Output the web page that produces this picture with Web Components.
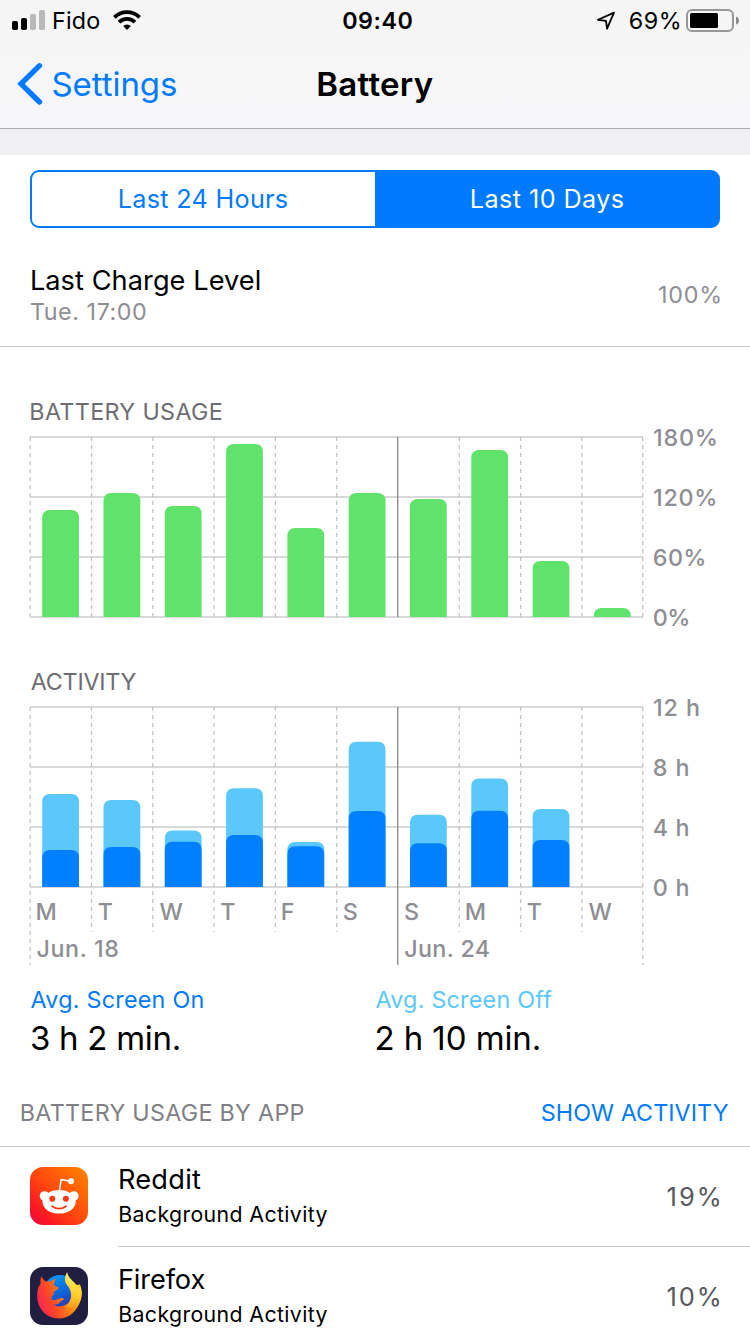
<!DOCTYPE html>
<html lang="en">
<head>
<meta charset="utf-8">
<title>Battery</title>
<style>
  body {
    margin: 0;
    background: #fff;
    font-family: Inter, "Liberation Sans", sans-serif;
    color: #000;
  }
</style>
</head>
<body>
<battery-screen></battery-screen>

<script>
const FONT = 'Inter, "Liberation Sans", sans-serif';
const pen = document.createElement("canvas").getContext("2d");

// one line of text, tracked so that its glyphs span exactly `ink` pixels
class InkLabel extends HTMLElement {
  constructor() {
    super();
    this.attachShadow({ mode: "open" });
  }

  connectedCallback() {
    const text = this.textContent;
    const size = Number(this.getAttribute("size")) || 23.3;
    const weight = this.getAttribute("weight") || 400;
    // measured large, because glyph bounds come back in whole pixels
    pen.font = `${weight} ${size * 10}px ${FONT}`;
    const m = pen.measureText(text);
    const left = m.actualBoundingBoxLeft / 10;
    const natural = left + m.actualBoundingBoxRight / 10;
    const ink = Number(this.getAttribute("ink")) || natural;
    const tracking = text.length > 1 ? (ink - natural) / (text.length - 1) : 0;

    this.shadowRoot.innerHTML = `
      <style>
        :host {
          display: block;
          flex: none;
          width: ${ink}px;
          white-space: nowrap;
          font-family: ${FONT};
          font-size: ${size}px;
          font-weight: ${weight};
          letter-spacing: ${tracking.toFixed(3)}px;
        }
        span { margin-left: ${left.toFixed(2)}px; }
      </style>
      <span><slot></slot></span>
    `;
  }
}

class StatusBar extends HTMLElement {
  constructor() {
    super();
    this.attachShadow({ mode: "open" });
    this.shadowRoot.innerHTML = `
      <style>
        :host {
          display: grid;
          grid-template-columns: 1fr auto 1fr;
          height: 41px;
          line-height: 41px;
          padding: 0 11px 0 12px;
        }
        div { display: flex; }
        svg { display: block; flex: none; }
        .right { justify-content: flex-end; }
      </style>
      <div>
        <svg width="33" height="41">
          <rect x="0" y="21" width="6" height="9" rx="1.8"/>
          <rect x="9" y="18" width="6" height="12" rx="1.8"/>
          <g fill="#b9b9ba">
            <rect x="18" y="14" width="6" height="16" rx="1.8"/>
            <rect x="27" y="10" width="6" height="20" rx="1.8"/>
          </g>
        </svg>
        <ink-label ink="45" style="margin-left:9px">Fido</ink-label>
        <svg width="28" height="41" viewBox="0 0 28 41" style="margin-left:14px">
          <g fill="none" stroke="#000" stroke-width="3.9">
            <path d="M1.4 17.3a18 18 0 0 1 25.2 0"/>
            <path d="M6 22.1a11.5 11.5 0 0 1 16 0"/>
          </g>
          <path d="M14 30l-3.9-4a5.6 5.6 0 0 1 7.8 0z"/>
        </svg>
      </div>
      <ink-label ink="68.5" weight="600" style="margin-left:4px">09:40</ink-label>
      <div class="right">
        <svg width="18" height="41" viewBox="0 0 18 41" style="margin-right:15px">
          <path d="M1 19.8L17 12.6L10 28.7L9 20.8z" fill="none" stroke="#000" stroke-width="1.8" stroke-linejoin="round"/>
        </svg>
        <ink-label ink="49" style="margin-right:7px">69%</ink-label>
        <svg width="53" height="41">
          <rect x="1" y="10" width="46" height="21" rx="5" fill="none" stroke="#98989a" stroke-width="2"/>
          <rect x="4" y="13" width="28" height="15" rx="1.5"/>
          <path d="M50 16.5q3 1 3 4t-3 4z" fill="#8b8b8d"/>
        </svg>
      </div>
    `;
  }
}
customElements.define("status-bar", StatusBar);

class NavBar extends HTMLElement {
  constructor() {
    super();
    this.attachShadow({ mode: "open" });
    this.shadowRoot.innerHTML = `
      <style>
        :host {
          display: grid;
          grid-template-columns: 1fr auto 1fr;
          height: 87px;
          line-height: 86px;
          padding: 0 16px 0 17px;
        }
        .back { display: flex; gap: 10px; color: #007aff; }
        svg { display: block; }
      </style>
      <div class="back">
        <svg width="26" height="86">
          <path d="M22.5 24.7L4 42.8L22.5 61" fill="none" stroke="#007aff" stroke-width="5.3" stroke-linecap="round" stroke-linejoin="miter"/>
        </svg>
        <slot name="back"></slot>
      </div>
      <slot name="title"></slot>
    `;
  }
}
customElements.define("nav-bar", NavBar);

class SegmentedControl extends HTMLElement {
  constructor() {
    super();
    this.attachShadow({ mode: "open" });
    this.shadowRoot.innerHTML = `
      <style>
        :host {
          display: flex;
          height: 54px;
          line-height: 54px;
          margin: 15px 30px 0;
          border: 2px solid #007aff;
          border-radius: 9px;
          background: linear-gradient(90deg, #fff 50%, #007aff 50%);
          color: #007aff;
        }
        div { flex: 1; display: flex; justify-content: center; }
        .on { color: #fff; }
      </style>
      <div><slot name="off"></slot></div>
      <div class="on"><slot name="on"></slot></div>
    `;
  }
}
customElements.define("segmented-control", SegmentedControl);

class ChargeRow extends HTMLElement {
  constructor() {
    super();
    this.attachShadow({ mode: "open" });
    this.shadowRoot.innerHTML = `
      <style>
        :host {
          display: flex;
          justify-content: space-between;
          box-sizing: border-box;
          height: 119px;
          padding: 36px 30.5px 0 31px;
          border-bottom: 1px solid #c8c7cc;
          color: #8e8e93;
        }
        .title { line-height: 34px; padding-left: 1px; color: #000; }
        .sub { line-height: 27px; }
        .level { line-height: 61px; }
      </style>
      <div>
        <div class="title"><slot name="title"></slot></div>
        <div class="sub"><slot name="sub"></slot></div>
      </div>
      <div class="level"><slot name="level"></slot></div>
    `;
  }
}
customElements.define("charge-row", ChargeRow);

const STEP = 61.3;
const BASE = 181;

class BarChart extends HTMLElement {
  constructor() {
    super();
    this.attachShadow({ mode: "open" });
  }

  list(name) {
    const value = this.getAttribute(name);
    return value ? value.split(",") : [];
  }

  bars(name, color) {
    return this.list(name).map((h, i) => {
      const x = STEP * i + 12.2;
      const r = Math.min(8, h);
      return `<path fill="${color}" d="M${x} ${BASE}v${r - h}q0 ${-r} ${r} ${-r}h${36.8 - 2 * r}q${r} 0 ${r} ${r}V${BASE}z"/>`;
    }).join("");
  }

  lines(labelled) {
    let out = "";
    for (let k = 0; k < 4; k++) {
      out += `<path d="M0 ${1 + 60 * k}H613" stroke="#d9d9db" stroke-width="2"/>`;
    }
    for (let i = 0; i < 11; i++) {
      const x = Math.min(STEP * i + 0.2, 612.7);
      let end = BASE;
      if (labelled) end = i === 0 || i === 10 || i === 6 ? 259 : 226;
      out += i === 6
        ? `<path d="M${x - 0.3} 1V${end}" stroke="#8e8e93" stroke-width="1.4"/>`
        : `<path d="M${x} 1V${end}" stroke="#c3c3c6" stroke-width="1.3" stroke-dasharray="4 4"/>`;
    }
    return out;
  }

  connectedCallback() {
    const days = this.list("days");
    const height = days.length ? 261 : 230;
    const ticks = this.list("ticks").map((t) => {
      const [text, ink] = t.split(":");
      return `<ink-label weight="500" ink="${ink}">${text}</ink-label>`;
    }).join("");
    const dates = this.list("dates").map((d) => {
      const [text, ink, column] = d.split(":");
      return `<ink-label weight="500" ink="${ink}" style="grid-column:${column}">${text}</ink-label>`;
    }).join("");

    this.shadowRoot.innerHTML = `
      <style>
        :host {
          display: grid;
          grid-template-columns: 613px auto;
          column-gap: 11px;
          justify-content: start;
          padding-left: 30px;
          color: #8e8e93;
        }
        .heading {
          grid-column: 1 / 3;
          line-height: 31px;
          height: 40px;
          padding-left: 1.3px;
          color: #6d6d72;
        }
        .plot { display: grid; height: ${height}px; }
        svg, .days { grid-area: 1 / 1; }
        svg { display: block; overflow: visible; }
        .days {
          display: grid;
          grid-template-columns: repeat(10, ${STEP}px);
          grid-auto-rows: 37px;
          line-height: 37px;
          padding-top: 187px;
        }
        .days ink-label { margin-left: 7.4px; }
        .ticks { line-height: 60px; margin-top: -28px; height: 240px; }
      </style>
      <div class="heading"><slot></slot></div>
      <div class="plot">
        <svg width="613" height="${height}">
          ${this.lines(days.length)}
          ${this.bars("total", this.getAttribute("color"))}
          ${this.bars("part", "#007fff")}
        </svg>
        <div class="days">
          ${days.map((d) => `<ink-label weight="500">${d}</ink-label>`).join("")}
          ${dates}
        </div>
      </div>
      <div class="ticks">${ticks}</div>
    `;
  }
}
customElements.define("bar-chart", BarChart);

class UsageAverage extends HTMLElement {
  constructor() {
    super();
    this.attachShadow({ mode: "open" });
    this.shadowRoot.innerHTML = `
      <style>
        :host { display: block; flex: 1; }
        .name { line-height: 31px; color: var(--tint); }
        .value { line-height: 46px; padding-left: 0.5px; }
      </style>
      <div class="name"><slot name="name"></slot></div>
      <div class="value"><slot></slot></div>
    `;
  }
}
customElements.define("usage-average", UsageAverage);

class AppRow extends HTMLElement {
  constructor() {
    super();
    this.attachShadow({ mode: "open" });
    this.shadowRoot.innerHTML = `
      <style>
        :host { display: flex; height: 100px; padding-left: 30px; }
        .icon { width: 58px; padding-top: 20px; margin-right: 30px; }
        .body {
          flex: 1;
          display: flex;
          justify-content: space-between;
          box-sizing: border-box;
          padding: 14px 31px 0 2px;
          border-bottom: 1px solid #c8c7cc;
        }
        .name { line-height: 38px; }
        .note { line-height: 31px; }
        .share { line-height: 72px; color: #59595e; }
      </style>
      <div class="icon"><slot name="icon"></slot></div>
      <div class="body">
        <div>
          <div class="name"><slot name="name"></slot></div>
          <div class="note"><slot name="note"></slot></div>
        </div>
        <div class="share"><slot name="share"></slot></div>
      </div>
    `;
  }
}
customElements.define("app-row", AppRow);

class RedditIcon extends HTMLElement {
  constructor() {
    super();
    this.attachShadow({ mode: "open" });
    this.shadowRoot.innerHTML = `
      <style>:host, svg { display: block; }</style>
      <svg width="58" height="58" viewBox="0 0 58 58">
        <defs>
          <linearGradient id="g" x1="0" y1="1" x2="1" y2="0">
            <stop offset="0" stop-color="#f4003f"/>
            <stop offset=".2" stop-color="#fb1a22"/>
            <stop offset=".5" stop-color="#ff4a0c"/>
            <stop offset="1" stop-color="#ff8500"/>
          </linearGradient>
        </defs>
        <rect width="58" height="58" rx="13" fill="url(#g)"/>
        <path d="M29.3 25L31.2 12.4L40 14.2" fill="none" stroke="#fff" stroke-width="1.5" stroke-linejoin="round"/>
        <g fill="#fff">
          <circle cx="41" cy="14.2" r="3"/>
          <circle cx="14.5" cy="29" r="4.8"/>
          <circle cx="43.8" cy="29" r="4.8"/>
          <ellipse cx="29.1" cy="34.8" rx="16.6" ry="11.8"/>
        </g>
        <g fill="#fb3a12">
          <circle cx="22.3" cy="31.8" r="3"/>
          <circle cx="35.9" cy="31.8" r="3"/>
        </g>
        <path d="M22 39.2q7.1 4.8 14.2 0" fill="none" stroke="#fb3a12" stroke-width="1.7" stroke-linecap="round"/>
      </svg>
    `;
  }
}
customElements.define("reddit-icon", RedditIcon);

class FirefoxIcon extends HTMLElement {
  constructor() {
    super();
    this.attachShadow({ mode: "open" });
    this.shadowRoot.innerHTML = `
      <style>:host, svg { display: block; }</style>
      <svg width="58" height="58" viewBox="0 0 58 58">
        <defs>
          <linearGradient id="globe" x1=".2" y1="0" x2=".6" y2="1">
            <stop offset="0" stop-color="#0a9bf5"/>
            <stop offset=".5" stop-color="#0a6ce0"/>
            <stop offset="1" stop-color="#2b3bb0"/>
          </linearGradient>
          <linearGradient id="body" x1="0" y1=".7" x2="1" y2=".3">
            <stop offset="0" stop-color="#f5205a"/>
            <stop offset=".3" stop-color="#ff4527"/>
            <stop offset=".65" stop-color="#ff8a16"/>
            <stop offset="1" stop-color="#ffd52b"/>
          </linearGradient>
          <linearGradient id="tail" x1=".5" y1="0" x2=".3" y2="1">
            <stop offset="0" stop-color="#fff36b"/>
            <stop offset=".55" stop-color="#ffd02c"/>
            <stop offset="1" stop-color="#ff9a1a"/>
          </linearGradient>
        </defs>
        <rect width="58" height="58" rx="13" fill="#201f42"/>
        <circle cx="30" cy="24.5" r="16.5" fill="url(#globe)"/>
        <path fill="url(#body)" d="M11.2 9.5C12.6 11 13.6 12.7 15.4 14.6C17.5 13.9 19 14.3 20.5 14.6C22 13.1 23.6 12.4 25.8 12.1C24.3 14.2 23.8 16 24.1 18.2C25 19.6 27.8 19.7 28.6 20.6C28.1 22.8 25 23.6 23.6 25.2C23.4 26.9 24.2 27.8 22.6 28.9C20.5 30 21.5 33.3 24.6 33.2C27.8 33 29.7 30.2 33.3 31.4C34.6 31.9 33.5 33.1 32.5 33.2C30.2 34.6 28 38.5 22.7 37.5C28.5 41.4 39.5 39.5 41 30.6C42 27 41.5 22.4 40 19L50 17.5C55 31.5 45.5 51.5 29.4 51.5C14.6 51.5 5.5 39.4 7.4 24.8C7.8 21.2 9 18.4 10.8 16.4C10.2 14 10.4 11.7 11.2 9.5Z"/>
        <path fill="url(#tail)" d="M37.1 5C34.3 10.2 34.2 14.4 37.1 18.1C42.6 24.6 43.4 34.4 34.3 40.4C43.2 42.7 48.4 35 49.4 32.3C48.9 36.3 47.8 38.4 46.4 41.1C52.1 34.2 53.3 25.2 50.1 18.5C50.4 21.4 49.6 23.3 49.6 23.3C47 15.1 38.5 13.2 37.1 5Z"/>
      </svg>
    `;
  }
}
customElements.define("firefox-icon", FirefoxIcon);

class BatteryScreen extends HTMLElement {
  constructor() {
    super();
    this.attachShadow({ mode: "open" });
  }

  getTemplate() {
    const template = document.createElement("template");
    template.innerHTML = `
      <style>
        :host { display: block; width: 750px; height: 1334px; overflow: hidden; }
        header {
          background: linear-gradient(#f5f5f6, #f7f7f9);
          border-bottom: 1px solid #a9a9ae;
        }
        .gap { height: 26px; background: #efeff4; }
        .charts { padding-top: 49px; }
        .averages { display: flex; padding: 17px 29px 0 31px; }
        .apps {
          display: flex;
          justify-content: space-between;
          height: 85px;
          box-sizing: border-box;
          padding: 36px 22px 0 21.8px;
          line-height: 31px;
          color: #808084;
        }
        .apps .link { color: #007aff; }
        .list { border-top: 1px solid #c8c7cc; }
      </style>
      <header>
        <status-bar></status-bar>
        <nav-bar>
          <ink-label slot="back" size="33" ink="123">Settings</ink-label>
          <ink-label slot="title" size="33" weight="600" ink="114.5">Battery</ink-label>
        </nav-bar>
      </header>
      <div class="gap"></div>
      <segmented-control>
        <ink-label slot="off" size="25.2" ink="167">Last 24 Hours</ink-label>
        <ink-label slot="on" size="25.2" ink="151" style="margin-left:2px">Last 10 Days</ink-label>
      </segmented-control>
      <charge-row>
        <ink-label slot="title" size="27.2" ink="227.5">Last Charge Level</ink-label>
        <ink-label slot="sub" ink="114.5">Tue. 17:00</ink-label>
        <ink-label slot="level" ink="60.5">100%</ink-label>
      </charge-row>
      <div class="charts">
        <bar-chart color="#5fe36a"
          ticks="180%:61.5,120%:61,60%:50,0%:34"
          total="107,124,111,173,89,124,118,167,56,9">
          <ink-label ink="190">BATTERY USAGE</ink-label>
        </bar-chart>
        <bar-chart color="#5ac8fa"
          ticks="12 h:44.5,8 h:34,4 h:34,0 h:34"
          days="M,T,W,T,F,S,S,M,T,W"
          dates="Jun. 18:80.5:1,Jun. 24:84:7"
          total="93,87,56.5,98.7,45,145.3,72.3,108.5,78"
          part="37,40,45.3,52,40.7,76,43.7,76.3,47">
          <ink-label ink="104.5">ACTIVITY</ink-label>
        </bar-chart>
      </div>
      <div class="averages">
        <usage-average style="--tint:#007aff">
          <ink-label slot="name" ink="171.5">Avg. Screen On</ink-label>
          <ink-label size="33" ink="147.5">3 h 2 min.</ink-label>
        </usage-average>
        <usage-average style="--tint:#5ac8fa">
          <ink-label slot="name" ink="175.5">Avg. Screen Off</ink-label>
          <ink-label size="33" ink="162.5">2 h 10 min.</ink-label>
        </usage-average>
      </div>
      <div class="apps">
        <ink-label ink="281.5">BATTERY USAGE BY APP</ink-label>
        <ink-label class="link" ink="186">SHOW ACTIVITY</ink-label>
      </div>
      <div class="list">
        <app-row>
          <reddit-icon slot="icon"></reddit-icon>
          <ink-label slot="name" size="27.2" ink="80.5">Reddit</ink-label>
          <ink-label slot="note" size="21.3" ink="207">Background Activity</ink-label>
          <ink-label slot="share" size="25.5" ink="51.5">19%</ink-label>
        </app-row>
        <app-row>
          <firefox-icon slot="icon"></firefox-icon>
          <ink-label slot="name" size="27.2" ink="84.5">Firefox</ink-label>
          <ink-label slot="note" size="21.3" ink="207">Background Activity</ink-label>
          <ink-label slot="share" size="25.5" ink="51.5">10%</ink-label>
        </app-row>
      </div>
    `;
    return template;
  }

  connectedCallback() {
    this.shadowRoot.appendChild(this.getTemplate().content.cloneNode(true));
  }
}

customElements.define("ink-label", InkLabel);
customElements.define("battery-screen", BatteryScreen);
</script>
</body>
</html>
